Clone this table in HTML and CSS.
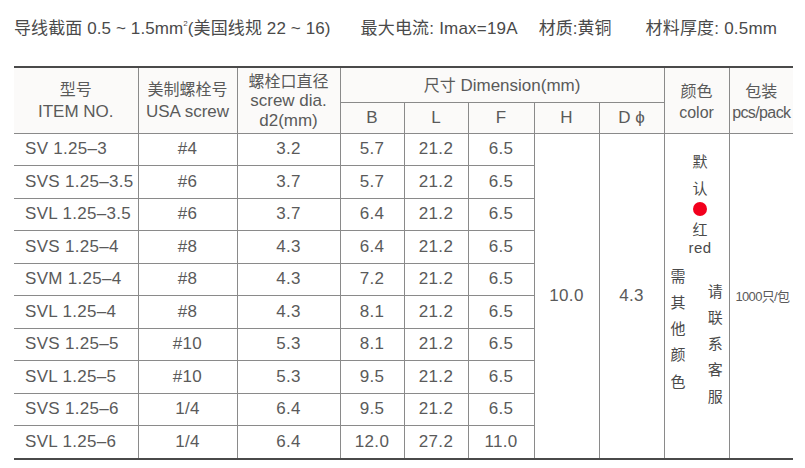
FILE: index.html
```html
<!DOCTYPE html>
<html lang="zh">
<head>
<meta charset="utf-8">
<link rel="stylesheet" href="styles.css">
</head>
<body>
<div class="page">
  <div class="spec">
    <span class="s1">导线截面 0.5 ~ 1.5mm<sup>2</sup>(美国线规 22 ~ 16)</span>
    <span class="s2">最大电流: Imax=19A</span>
    <span class="s3">材质:黄铜</span>
    <span class="s4">材料厚度: 0.5mm</span>
  </div>
  <table class="tbl">
    <colgroup>
      <col class="c-item"><col class="c-usa"><col class="c-dia">
      <col class="c-b"><col class="c-l"><col class="c-f"><col class="c-h"><col class="c-d">
      <col class="c-color"><col class="c-pack">
    </colgroup>
    <thead>
      <tr class="h1">
        <th rowspan="2" class="hd2"><span class="cn">型号</span><br>ITEM NO.</th>
        <th rowspan="2" class="hd2"><span class="cn">美制螺栓号</span><br>USA screw</th>
        <th rowspan="2" class="hd3"><span class="cn">螺栓口直径</span><br>screw dia.<br>d2(mm)</th>
        <th colspan="5" class="dim"><span class="cn">尺寸</span> Dimension(mm)</th>
        <th rowspan="2" class="hd2 sm"><span class="cn">颜色</span><br>color</th>
        <th rowspan="2" class="hd2 sm last"><span class="cn">包装</span><br><span class="pcs">pcs/pack</span></th>
      </tr>
      <tr class="h2">
        <th>B</th><th>L</th><th>F</th><th>H</th><th>D ϕ</th>
      </tr>
    </thead>
    <tbody>
      <tr>
        <td class="item">SV 1.25–3</td><td>#4</td><td>3.2</td><td>5.7</td><td>21.2</td><td>6.5</td>
        <td rowspan="10" class="merged">10.0</td>
        <td rowspan="10" class="merged">4.3</td>
        <td rowspan="10" class="color">
          <div class="color-box">
            <span class="ch l27">默</span>
            <span class="ch l27">认</span>
            <span class="dot"></span>
            <span class="ch l20">红</span>
            <span class="red">red</span>
            <div class="vcols">
              <div class="vcol left"><span>需</span><span>其</span><span>他</span><span>颜</span><span>色</span></div>
              <div class="vcol right"><span>请</span><span>联</span><span>系</span><span>客</span><span>服</span></div>
            </div>
          </div>
        </td>
        <td rowspan="10" class="merged pack last">1000只/包</td>
      </tr>
      <tr><td class="item">SVS 1.25–3.5</td><td>#6</td><td>3.7</td><td>5.7</td><td>21.2</td><td>6.5</td></tr>
      <tr><td class="item">SVL 1.25–3.5</td><td>#6</td><td>3.7</td><td>6.4</td><td>21.2</td><td>6.5</td></tr>
      <tr><td class="item">SVS 1.25–4</td><td>#8</td><td>4.3</td><td>6.4</td><td>21.2</td><td>6.5</td></tr>
      <tr><td class="item">SVM 1.25–4</td><td>#8</td><td>4.3</td><td>7.2</td><td>21.2</td><td>6.5</td></tr>
      <tr><td class="item">SVL 1.25–4</td><td>#8</td><td>4.3</td><td>8.1</td><td>21.2</td><td>6.5</td></tr>
      <tr><td class="item">SVS 1.25–5</td><td>#10</td><td>5.3</td><td>8.1</td><td>21.2</td><td>6.5</td></tr>
      <tr><td class="item">SVL 1.25–5</td><td>#10</td><td>5.3</td><td>9.5</td><td>21.2</td><td>6.5</td></tr>
      <tr><td class="item">SVS 1.25–6</td><td>1/4</td><td>6.4</td><td>9.5</td><td>21.2</td><td>6.5</td></tr>
      <tr><td class="item">SVL 1.25–6</td><td>1/4</td><td>6.4</td><td>12.0</td><td>27.2</td><td>11.0</td></tr>
    </tbody>
  </table>
</div>
</body>
</html>
```
FILE: styles.css
```css
html, body {
  margin: 0;
  padding: 0;
  background: #ffffff;
}
body {
  font-family: "Liberation Sans", "Noto Sans CJK SC", sans-serif;
  color: #5a5a5a;
}
.page {
  padding: 0 0 0 14px;
  width: 779px;
}
.spec {
  display: flex;
  align-items: baseline;
  height: 54px;
  padding-top: 14px;
  box-sizing: border-box;
  font-family: "Liberation Sans", "Noto Sans CJK SC", sans-serif;
  font-size: 17px;
  color: #4a4a4a;
  white-space: nowrap;
}
.s1 { letter-spacing: 0.1px; }
.spec sup {
  font-size: 8px;
  vertical-align: 8px;
  line-height: 0;
}
.s2 { margin-left: 30px; letter-spacing: 0.2px; }
.s3 { margin-left: 21px; }
.s4 { margin-left: 34px; letter-spacing: 0.2px; }
.tbl {
  margin-top: 12px;
  border-collapse: collapse;
  table-layout: fixed;
  width: 779px;
  border-top: 2px solid #4a4a4a;
  border-bottom: 2px solid #4a4a4a;
}
.c-item { width: 124px; }
.c-usa { width: 99px; }
.c-dia { width: 103px; }
.c-b { width: 64px; }
.c-l { width: 64px; }
.c-f { width: 66px; }
.c-h { width: 65px; }
.c-d { width: 65px; }
.c-color { width: 65px; }
.c-pack { width: 64px; }
th, td {
  border: 1px solid #8a8a8a;
  padding: 0;
  text-align: center;
  font-weight: normal;
  color: #5a5a5a;
}
th:first-child, td:first-child { border-left: none; }
.last { border-right: none; }
thead th {
  background: #fbfaf9;
  font-size: 17px;
  line-height: 22px;
}
.cn {
  font-family: "Noto Sans CJK SC", sans-serif;
  font-size: 16px;
}
.hd3 { line-height: 19.5px; }
.h1 { height: 35px; }
.h1 .dim { line-height: 20px; }
.h2 { height: 31px; }
.h2 th { line-height: 20px; }
.sm { font-size: 16px; line-height: 21px; vertical-align: middle; padding-top: 2px; }
.pcs { letter-spacing: -0.6px; }
tbody td {
  height: 31.5px;
  font-size: 17px;
  letter-spacing: 0.3px;
}
tbody td.item {
  text-align: left;
  padding-left: 11px;
}
.merged { vertical-align: middle; }
.pack {
  font-size: 13px;
  letter-spacing: -0.7px;
  text-align: left;
  padding-left: 6px;
}
.color {
  vertical-align: top;
}
.color-box {
  display: flex;
  flex-direction: column;
  align-items: center;
  padding-top: 13px;
  padding-left: 7px;
  font-family: "Noto Sans CJK SC", sans-serif;
  font-size: 15px;
  color: #4a4a4a;
}
.ch { display: block; }
.l27 { line-height: 27px; }
.l20 { line-height: 20px; }
.dot {
  display: block;
  width: 14px;
  height: 14px;
  border-radius: 50%;
  background: #f2001d;
  margin: 1px 0 3px;
}
.red {
  display: block;
  font-family: "Liberation Sans", sans-serif;
  font-size: 15px;
  line-height: 18px;
  letter-spacing: 0.5px;
}
.vcols {
  display: flex;
  align-self: stretch;
  gap: 22px;
  padding-left: 0;
  margin-left: -1px;
}
.vcol {
  display: flex;
  flex-direction: column;
  line-height: 26.3px;
}
.vcol.left { margin-top: 6px; }
.vcol.right { margin-top: 21px; }
```
